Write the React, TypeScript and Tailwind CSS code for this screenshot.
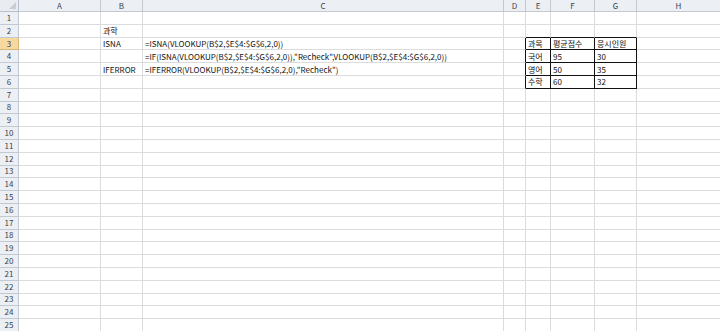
import React from "react";

const COLS = [
  { key: "A", w: 82 },
  { key: "B", w: 42 },
  { key: "C", w: 361 },
  { key: "D", w: 22 },
  { key: "E", w: 25 },
  { key: "F", w: 44 },
  { key: "G", w: 42 },
  { key: "H", w: 84 },
];

const DATA: Record<string, string> = {
  B2: "과학",
  B3: "ISNA",
  C3: "=ISNA(VLOOKUP(B$2,$E$4:$G$6,2,0))",
  C4: '=IF(ISNA(VLOOKUP(B$2,$E$4:$G$6,2,0)),"Recheck",VLOOKUP(B$2,$E$4:$G$6,2,0))',
  B5: "IFERROR",
  C5: '=IFERROR(VLOOKUP(B$2,$E$4:$G$6,2,0),"Recheck")',
  E3: "과목",
  F3: "평균점수",
  G3: "응시인원",
  E4: "국어",
  F4: "95",
  G4: "30",
  E5: "영어",
  F5: "50",
  G5: "35",
  E6: "수학",
  F6: "60",
  G6: "32",
};

const font = { fontFamily: '"Noto Sans CJK KR", "Noto Sans", sans-serif' };

export default function App() {
  const rows = Array.from({ length: 25 }, (_, i) => i + 1);
  const colIdx = (k: string) => "ABCDEFGH".indexOf(k);
  return (
    <div className="w-[720px] h-[331px] overflow-hidden bg-white" style={font}>
      <div
        className="grid w-[721px]"
        style={{
          gridTemplateColumns: `19px ${COLS.map((c) => c.w + "px").join(" ")}`,
          gridTemplateRows: `12px repeat(25, 12.8px)`,
        }}
      >
        <div className="relative bg-[#e9edf2] border-r border-b border-[#b8c0cc]">
          <div className="absolute right-[2px] bottom-[2px] w-0 h-0 border-l-[7px] border-l-transparent border-b-[7px] border-b-[#c8ced6]" />
        </div>
        {COLS.map((c) => (
          <div
            key={c.key}
            className="bg-[#eceff3] border-r border-b border-[#c3c9d1] text-[8px] leading-[11px] text-center text-[#3c4350]"
          >
            {c.key}
          </div>
        ))}
        {rows.map((r) => (
          <React.Fragment key={r}>
            <div
              className={`border-r border-b text-[8px] flex items-center justify-center text-[#3c4350] ${
                r === 3
                  ? "bg-[#f7d9a0] border-[#d9b778]"
                  : "bg-[#eceff3] border-[#c3c9d1]"
              }`}
            >
              {r}
            </div>
            {COLS.map((c) => {
              const ci = colIdx(c.key);
              const inTable = r >= 3 && r <= 6;
              const blackRight = inTable && ci >= 3 && ci <= 6;
              const blackBottom = r >= 2 && r <= 6 && ci >= 4 && ci <= 6;
              const v = DATA[c.key + r];
              return (
                <div
                  key={c.key}
                  className={`border-r border-b whitespace-nowrap text-[8px] text-[#111] flex items-center pl-[2px] pt-[1px] overflow-visible ${
                    blackRight ? "border-r-[#111]" : "border-r-[#dadcdd]"
                  } ${blackBottom ? "border-b-[#111]" : "border-b-[#dadcdd]"}`}
                >
                  {v ? <span className="relative z-10">{v}</span> : null}
                </div>
              );
            })}
          </React.Fragment>
        ))}
      </div>
    </div>
  );
}
